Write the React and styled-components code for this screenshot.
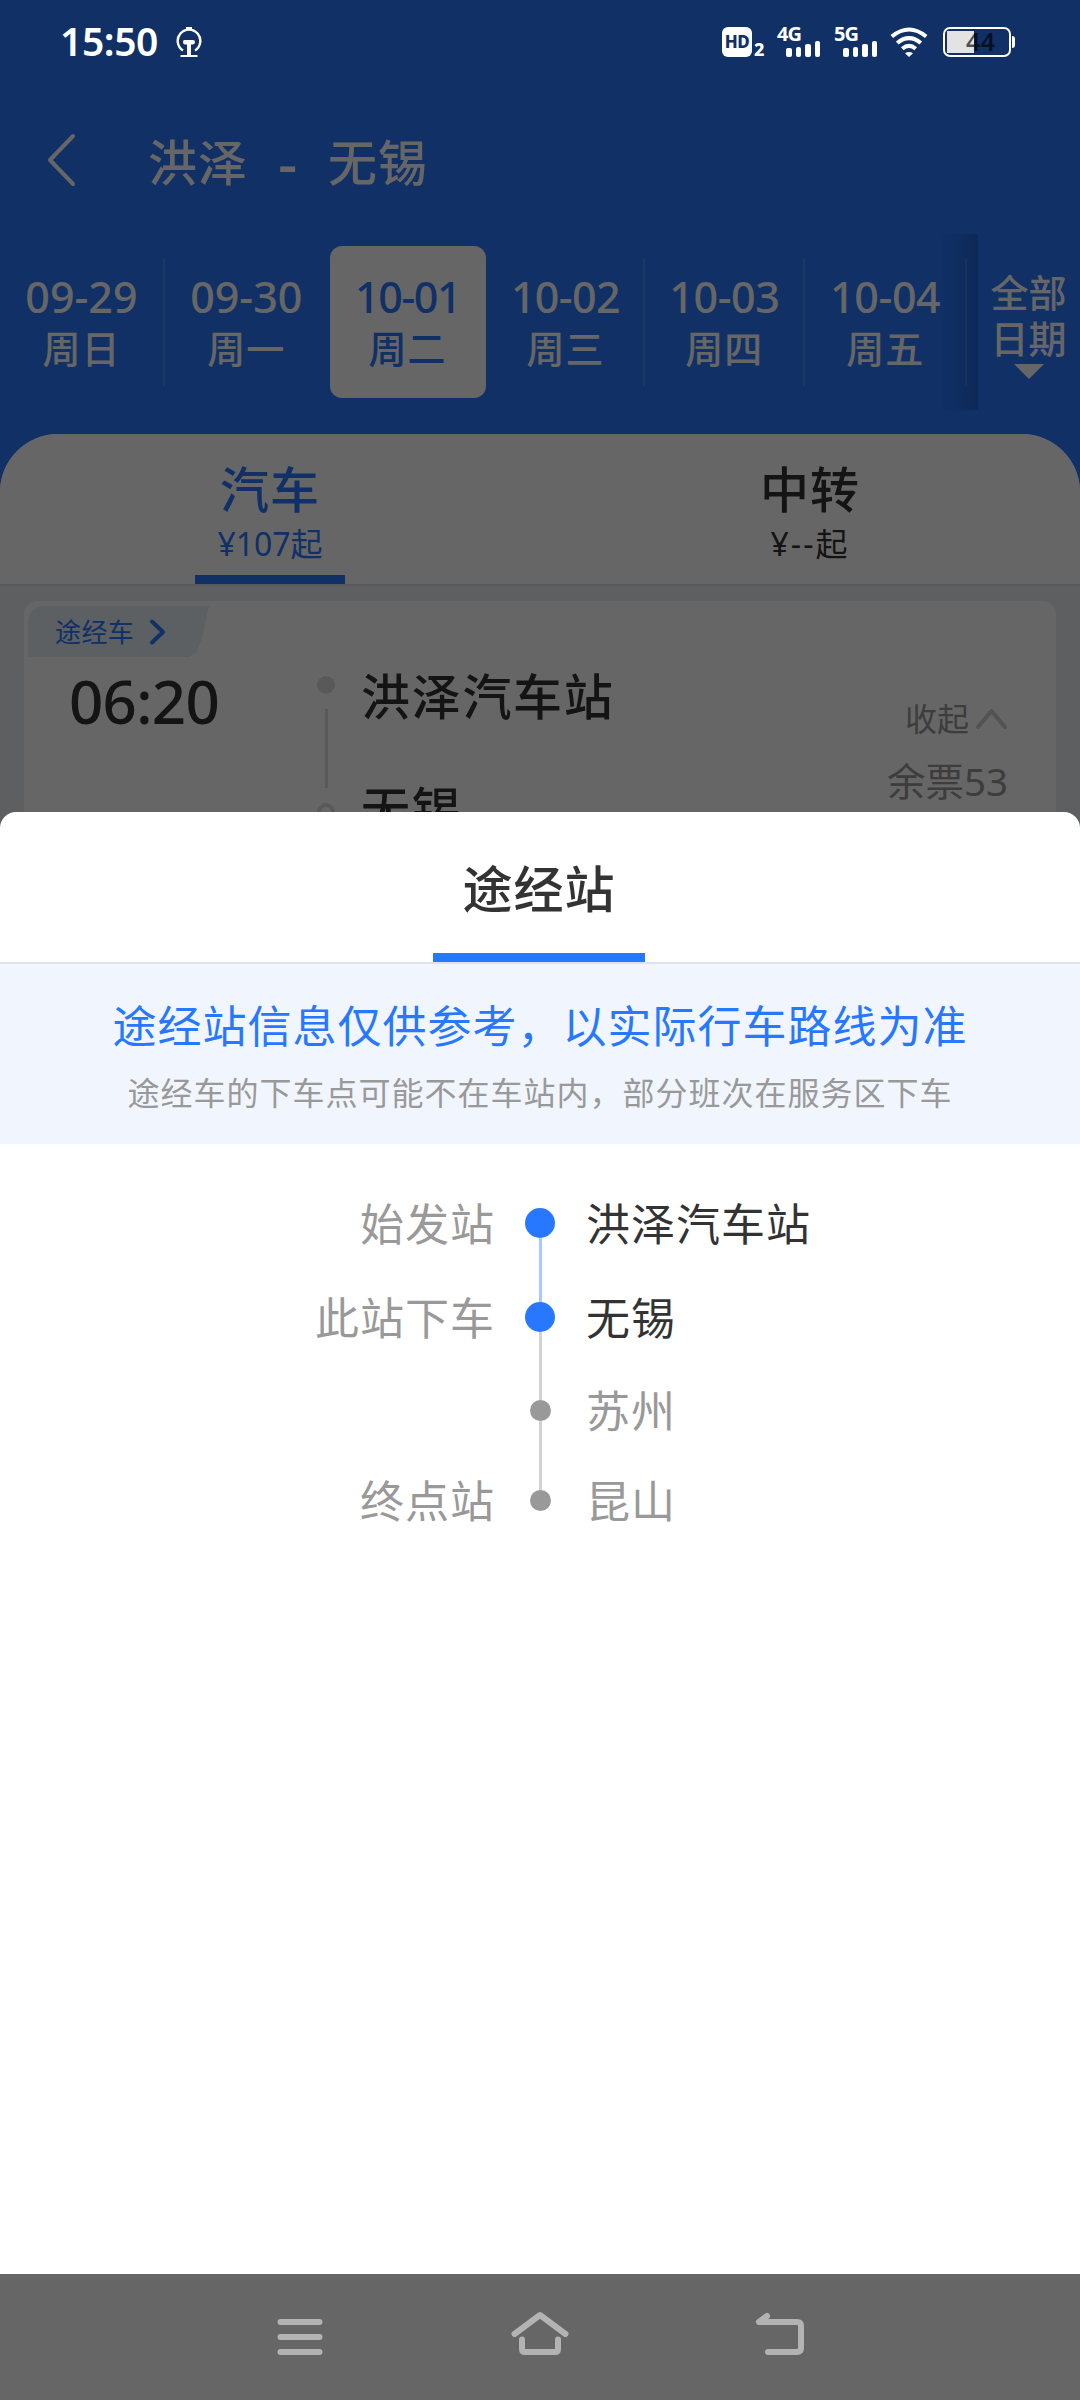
import React, { useState } from 'react';
import styled, { createGlobalStyle, ThemeProvider } from 'styled-components';

const theme = {
  colors: {
    primary: '#2878ff',
    white: '#ffffff',
    text: '#333333',
    muted: '#999999',
    list: '#e8eef2',
    notice: '#f1f6fe',
  },
};

const GlobalStyle = createGlobalStyle`
  * { box-sizing: border-box; }
  body {
    margin: 0;
    font-family: "Noto Sans", "Noto Sans CJK SC", sans-serif;
  }
  svg { display: block; }
`;

const Screen = styled.div`
  display: flex;
  flex-direction: column;
  width: 1080px;
  height: 2400px;
  background: ${props => props.theme.colors.white};
`;

const Page = styled.div`
  position: relative;
  flex: none;
  height: 828px;
  overflow: hidden;
  background: ${props => props.theme.colors.primary};
`;

const Overlay = styled.div`
  position: absolute;
  inset: 0;
  background: rgba(0, 0, 0, 0.6);
`;

/* status bar */

const StatusBar = styled.div`
  position: relative;
  z-index: 2;
  display: flex;
  justify-content: space-between;
  height: 83px;
  padding: 26px 65px 0 60px;
  color: ${props => props.theme.colors.white};
`;

const StatusGroup = styled.div`
  display: flex;
  height: 31px;
`;

const Clock = styled.span`
  width: 116px;
  font-size: 39px;
  font-weight: 600;
  line-height: 30px;
  letter-spacing: -0.4px;
`;

const HdBadge = styled.span`
  width: 30px;
  height: 30px;
  margin-top: 1px;
  border-radius: 6px;
  background: ${props => props.theme.colors.white};
  color: #113066;
  font: 800 17px/30px "Noto Sans", sans-serif;
  letter-spacing: -0.5px;
  text-align: center;
`;

const HdIndex = styled.span`
  width: 25px;
  padding: 14px 0 0 2px;
  font-size: 18px;
  font-weight: 800;
  line-height: 19px;
`;

const Signal = styled.div`
  display: flex;
  flex-direction: column;
  width: ${props => props.width}px;
`;

const SignalLabel = styled.span`
  height: 15px;
  font-size: 20px;
  font-weight: 700;
  line-height: 16px;
  letter-spacing: -1px;
`;

const SignalBars = styled.div`
  display: flex;
  align-items: flex-end;
  gap: 4px;
  height: 16px;
  padding-left: 9px;
`;

const SignalBar = styled.i`
  width: 5.6px;
  height: ${props => props.height}px;
  border-radius: 2px;
  background: ${props => props.theme.colors.white};
`;

const Battery = styled.div`
  display: flex;
  align-items: center;
  margin-left: 15px;
`;

const BatteryBody = styled.div`
  width: 68px;
  height: 30px;
  padding-left: 21px;
  border: 2px solid ${props => props.theme.colors.white};
  border-radius: 7px;
  background: linear-gradient(#e3e3e3, #e3e3e3) 2px 2px / 27px 22px no-repeat;
  color: rgba(0, 0, 0, 0.68);
  font-size: 25px;
  font-weight: 600;
  line-height: 25px;
  letter-spacing: 0.5px;
`;

const BatteryTip = styled.div`
  width: 3px;
  height: 12px;
  margin-left: 1px;
  border-radius: 0 3px 3px 0;
  background: ${props => props.theme.colors.white};
`;

/* header and dates */

const Header = styled.div`
  display: flex;
  align-items: center;
  height: 154px;
  padding-left: 47px;
  color: ${props => props.theme.colors.white};
`;

const Title = styled.h1`
  display: flex;
  align-items: center;
  margin: 3px 0 0 71px;
  font-size: 49px;
  font-weight: 500;
  line-height: 60px;
  letter-spacing: 1px;
`;

const Dash = styled.span`
  width: 80px;
  font-size: 60px;
  text-align: center;
`;

const Dates = styled.div`
  display: flex;
  height: 197px;
  color: ${props => props.theme.colors.white};
`;

const DateCell = styled.div`
  display: flex;
  flex-direction: column;
  align-items: center;
  width: ${props => props.width}px;
  height: ${props => (props.$active ? 152 : 128)}px;
  margin: ${props => (props.$active ? '9px 2px 0 2px' : '21px 0 0')};
  padding-top: ${props => (props.$active ? 27 : 15)}px;
  border-radius: ${props => (props.$active ? 12 : 0)}px;
  border-right: ${props => (props.$line ? '2px solid rgba(255, 255, 255, 0.13)' : 'none')};
  background: ${props => (props.$active ? props.theme.colors.white : 'transparent')};
  color: ${props => (props.$active ? props.theme.colors.primary : 'inherit')};
`;

const Day = styled.span`
  font-size: 43px;
  font-weight: 500;
  line-height: 48px;
  letter-spacing: ${props => props.spacing || 0}px;
`;

const Week = styled.span`
  font-size: 38px;
  font-weight: 500;
  line-height: 54px;
  letter-spacing: 1px;
`;

const EdgeShade = styled.div`
  width: 38px;
  height: 176px;
  margin: -3px 0 0 -27px;
  background: linear-gradient(to right, rgba(0, 20, 60, 0), rgba(0, 20, 60, 0.17));
`;

const AllDates = styled.div`
  display: flex;
  flex-direction: column;
  align-items: center;
  width: 102px;
  padding-top: 32px;
  font-size: 38px;
  font-weight: 500;
  line-height: 46px;
`;

const AllDatesText = styled.span`
  width: 77px;
`;

const Caret = styled.i`
  margin-top: 3px;
  border: 15px solid transparent;
  border-top-color: ${props => props.theme.colors.white};
  border-bottom: 0;
`;

/* ticket list */

const List = styled.div`
  height: 394px;
  border-radius: 58px 58px 0 0;
  background: ${props => props.theme.colors.list};
`;

const Tabs = styled.div`
  display: flex;
  height: 152px;
  border-bottom: 2px solid #d8e0e8;
  border-radius: 58px 58px 0 0;
  background: ${props => props.theme.colors.white};
`;

const Tab = styled.div`
  display: flex;
  flex: 1;
  flex-direction: column;
  align-items: center;
  padding-top: 24px;
  color: ${props => (props.$active ? props.theme.colors.primary : props.theme.colors.text)};
`;

const TabName = styled.span`
  font-size: 49px;
  font-weight: 500;
  line-height: 62px;
  letter-spacing: 1px;
`;

const TabPrice = styled.span`
  font-size: 32px;
  line-height: 48px;
  letter-spacing: ${props => props.spacing || 0}px;
`;

const TabLine = styled.i`
  width: ${props => props.width}px;
  height: 9px;
  margin-top: auto;
  background: ${props => props.theme.colors.primary};
`;

const Ticket = styled.div`
  display: flex;
  height: 300px;
  margin: 15px 24px 0;
  border-radius: 14px 14px 0 0;
  background: ${props => props.theme.colors.white};
`;

const Departure = styled.div`
  width: 289px;
  padding: 5px 0 0 4px;
`;

const Tag = styled.div`
  display: flex;
  align-items: center;
  gap: 15px;
  width: 181px;
  height: 51px;
  padding-left: 27px;
  border-radius: 16px 0 0 0;
  background: #e5eff7;
  clip-path: polygon(0 0, 100% 0, 96% 65%, 93% 91%, 89% 100%, 0 100%);
  color: ${props => props.theme.colors.primary};
  font-size: 26px;
  line-height: 38px;
  letter-spacing: 0.4px;
`;

const DepartTime = styled.div`
  padding: 8px 0 0 41px;
  font-size: 60px;
  font-weight: 500;
  line-height: 72px;
  letter-spacing: -0.7px;
  color: ${props => props.theme.colors.text};
`;

const Track = styled.div`
  display: flex;
  flex-direction: column;
  align-items: center;
  width: 26px;
  padding-top: 75px;
`;

const TrackDot = styled.i`
  width: 18px;
  height: 18px;
  border: 4px solid #dedede;
  border-radius: 50%;
  background: ${props => (props.$filled ? '#dedede' : 'transparent')};
`;

const TrackLine = styled.i`
  width: 3px;
  height: 79px;
  margin: 15px 0;
  background: #dedede;
`;

const Stations = styled.div`
  flex: 1;
  padding: 64px 0 0 22px;
  color: ${props => props.theme.colors.text};
`;

const StationName = styled.div`
  height: 113px;
  font-size: 49px;
  font-weight: 500;
  line-height: 62px;
  letter-spacing: 1.7px;
`;

const TicketSide = styled.div`
  display: flex;
  flex-direction: column;
  align-items: flex-end;
  padding: 95px 48px 0 0;
  color: ${props => props.theme.colors.muted};
`;

const Collapse = styled.div`
  display: flex;
  align-items: center;
  gap: 6px;
  font-size: 32px;
  line-height: 46px;
`;

const Remaining = styled.div`
  margin-top: 11px;
  font-size: 38.5px;
  line-height: 56px;
`;

/* bottom sheet */

const Sheet = styled.div`
  position: relative;
  flex: 1;
  margin-top: -16px;
  border-radius: 16px 16px 0 0;
  background: ${props => props.theme.colors.white};
`;

const SheetHead = styled.div`
  display: flex;
  flex-direction: column;
  align-items: center;
  height: 152px;
  padding: 46px 2px 0 0;
  border-bottom: 2px solid #dde3ec;
`;

const SheetTitle = styled(TabName)`
  font-size: 50px;
  color: ${props => props.theme.colors.text};
`;

const Notice = styled.div`
  height: 180px;
  padding-top: 31px;
  background: ${props => props.theme.colors.notice};
  text-align: center;
  white-space: nowrap;
`;

const NoticeMain = styled.div`
  font-size: 44px;
  line-height: 62px;
  letter-spacing: 1px;
  color: ${props => props.theme.colors.primary};
`;

const NoticeSub = styled.div`
  margin-top: 12px;
  font-size: 32px;
  line-height: 48px;
  letter-spacing: 1px;
  color: ${props => props.theme.colors.muted};
`;

const Route = styled.div`
  padding-top: 32px;
`;

const Stop = styled.div`
  display: grid;
  grid-template-columns: 495px 90px 1fr;
  height: ${props => props.height}px;
  font-size: 44px;
  line-height: 97px;
  letter-spacing: 1px;
`;

const StopLabel = styled.span`
  text-align: right;
  color: ${props => props.theme.colors.muted};
`;

const StopTrack = styled.span`
  display: flex;
  flex-direction: column;
  align-items: center;
`;

const StopLine = styled.i`
  width: 3px;
  flex: ${props => (props.height ? `0 0 ${props.height}px` : 1)};
  background: ${props => props.color};
`;

const StopDot = styled.i`
  flex: none;
  width: ${props => props.size}px;
  height: ${props => props.size}px;
  border-radius: 50%;
  background: ${props => props.color};
`;

const StopName = styled.span`
  padding-left: 1px;
  color: ${props => (props.$reached ? props.theme.colors.text : props.theme.colors.muted)};
`;

const NavBar = styled.div`
  display: flex;
  flex: none;
  justify-content: space-around;
  height: 126px;
  padding: 32px 180px 0;
  background: #666666;
`;

const BLUE_LINE = '#a6caff';
const GREY_LINE = '#d2d2d2';

const DATES = [
  { day: '09-29', week: '周日', width: 165, line: true },
  { day: '09-30', week: '周一', width: 163 },
  { day: '10-01', week: '周二', width: 156, spacing: -1.4 },
  { day: '10-02', week: '周三', width: 158, line: true, spacing: -0.6 },
  { day: '10-03', week: '周四', width: 160, line: true, spacing: -0.4 },
  { day: '10-04', week: '周五', width: 162, line: true, spacing: -0.4 },
];

const STOPS = [
  { label: '始发站', name: '洪泽汽车站', size: 30, reached: true, height: 94, after: BLUE_LINE },
  { label: '此站下车', name: '无锡', size: 30, reached: true, height: 93, before: BLUE_LINE, after: GREY_LINE },
  { label: '', name: '苏州', size: 21, height: 90, before: GREY_LINE, after: GREY_LINE },
  { label: '终点站', name: '昆山', size: 21, height: 94, before: GREY_LINE },
];

const Stroke = ({ width, height, d, weight, color = 'currentColor' }) => (
  <svg width={width} height={height} viewBox={`0 0 ${width} ${height}`} fill="none"
    stroke={color} strokeWidth={weight} strokeLinecap="round" strokeLinejoin="round">
    <path d={d} />
  </svg>
);

const RailwayIcon = () => (
  <svg width="26" height="31" viewBox="0 0 26 31" fill="none" stroke="#fff" strokeWidth="2.4">
    <path d="M7 24.500A11.300 11.300 0 1 1 19 24.500" />
    <path d="M10 2.500h6" strokeWidth="3" />
    <path d="M9 14h8q2 0 2 2t-2 2.500h-2v10.500h6.500v2.200H4.500V29h6.500V18.500H9q-2 0-2-2.500t2-2z" fill="#fff" stroke="none" />
  </svg>
);

const WifiIcon = () => (
  <svg width="38" height="31" viewBox="0 0 38 31" fill="none" stroke="#fff" strokeWidth="4">
    <path d="M1.800 10.500Q19-3.500 36.200 10.500" />
    <path d="M7.200 17Q19 7.300 30.800 17" />
    <path d="M12.300 22.800Q19 17 25.700 22.800" />
    <path d="M15 27.300Q19 24.500 23 27.300L19 31z" fill="#fff" stroke="none" />
  </svg>
);

const SignalIcon = ({ label, width }) => (
  <Signal width={width}>
    <SignalLabel>{label}</SignalLabel>
    <SignalBars>
      {[9, 10, 13, 16].map((height) => (
        <SignalBar key={height} height={height} />
      ))}
    </SignalBars>
  </Signal>
);

const App = () => {
  const [activeDay, setActiveDay] = useState('10-01');

  return (
    <ThemeProvider theme={theme}>
      <GlobalStyle />
      <Screen>
        <Page>
          <StatusBar>
            <StatusGroup>
              <Clock>15:50</Clock>
              <RailwayIcon />
            </StatusGroup>
            <StatusGroup>
              <HdBadge>HD</HdBadge>
              <HdIndex>2</HdIndex>
              <SignalIcon label="4G" width={57} />
              <SignalIcon label="5G" width={56} />
              <WifiIcon />
              <Battery>
                <BatteryBody>44</BatteryBody>
                <BatteryTip />
              </Battery>
            </StatusGroup>
          </StatusBar>

          <Header>
            <Stroke width={30} height={54} weight={4} d="M26 3L3 27L26 51" />
            <Title>洪泽<Dash>-</Dash>无锡</Title>
          </Header>

          <Dates>
            {DATES.map((item) => (
              <DateCell
                key={item.day}
                width={item.width}
                $line={item.line}
                $active={item.day === activeDay}
                onClick={() => setActiveDay(item.day)}
              >
                <Day spacing={item.spacing}>{item.day}</Day>
                <Week>{item.week}</Week>
              </DateCell>
            ))}
            <EdgeShade />
            <AllDates>
              <AllDatesText>全部日期</AllDatesText>
              <Caret />
            </AllDates>
          </Dates>

          <List>
            <Tabs>
              <Tab $active>
                <TabName>汽车</TabName>
                <TabPrice>¥107起</TabPrice>
                <TabLine width={150} />
              </Tab>
              <Tab>
                <TabName>中转</TabName>
                <TabPrice spacing={2}>¥--起</TabPrice>
              </Tab>
            </Tabs>
            <Ticket>
              <Departure>
                <Tag>
                  途经车
                  <Stroke width={18} height={28} weight={4} d="M3 3.500L14 14L3 24.500" />
                </Tag>
                <DepartTime>06:20</DepartTime>
              </Departure>
              <Track>
                <TrackDot $filled />
                <TrackLine />
                <TrackDot />
              </Track>
              <Stations>
                <StationName>洪泽汽车站</StationName>
                <StationName>无锡</StationName>
              </Stations>
              <TicketSide>
                <Collapse>
                  收起
                  <Stroke width={33} height={22} weight={4} color="#ccc" d="M3 19L16.500 3L30 19" />
                </Collapse>
                <Remaining>余票53</Remaining>
              </TicketSide>
            </Ticket>
          </List>
          <Overlay />
        </Page>

        <Sheet>
          <SheetHead>
            <SheetTitle>途经站</SheetTitle>
            <TabLine width={212} />
          </SheetHead>
          <Notice>
            <NoticeMain>途经站信息仅供参考，以实际行车路线为准</NoticeMain>
            <NoticeSub>途经车的下车点可能不在车站内，部分班次在服务区下车</NoticeSub>
          </Notice>
          <Route>
            {STOPS.map((stop) => (
              <Stop key={stop.name} height={stop.height}>
                <StopLabel>{stop.label}</StopLabel>
                <StopTrack>
                  <StopLine height={47 - stop.size / 2} color={stop.before || 'transparent'} />
                  <StopDot size={stop.size} color={stop.reached ? theme.colors.primary : theme.colors.muted} />
                  <StopLine color={stop.after || 'transparent'} />
                </StopTrack>
                <StopName $reached={stop.reached}>{stop.name}</StopName>
              </Stop>
            ))}
          </Route>
        </Sheet>

        <NavBar>
          <Stroke width={60} height={60} weight={6} color="#b3b3b3" d="M10.500 16H49.500M10.500 31H49.500M10.500 46H49.500" />
          <Stroke width={60} height={60} weight={6} color="#b3b3b3" d="M4.500 28L30 9L55.500 28M12 33.500V43Q12 46 15 46H45Q48 46 48 43V33.500" />
          <Stroke width={60} height={60} weight={6} color="#b3b3b3" d="M17 10L9 16H47Q51 16 51 20V42Q51 46 47 46H18" />
        </NavBar>
      </Screen>
    </ThemeProvider>
  );
};

export default App;
